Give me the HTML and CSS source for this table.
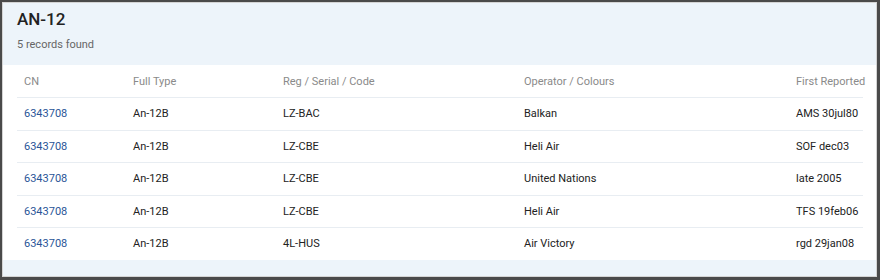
FILE: index.html
```html
<!DOCTYPE html>
<html>
<head>
<meta charset="utf-8">
<link rel="stylesheet" href="styles.css">
</head>
<body>
<div class="card">
  <div class="card-head">
    <h1 class="title">AN-12</h1>
    <div class="count">5 records found</div>
  </div>
  <div class="card-body">
    <table class="records">
      <colgroup>
        <col class="c-cn"><col class="c-type"><col class="c-reg"><col class="c-op"><col>
      </colgroup>
      <thead>
        <tr><th>CN</th><th>Full Type</th><th>Reg / Serial / Code</th><th>Operator / Colours</th><th>First Reported</th></tr>
      </thead>
      <tbody>
        <tr><td><a href="#">6343708</a></td><td>An-12B</td><td>LZ-BAC</td><td>Balkan</td><td>AMS 30jul80</td></tr>
        <tr><td><a href="#">6343708</a></td><td>An-12B</td><td>LZ-CBE</td><td>Heli Air</td><td>SOF dec03</td></tr>
        <tr><td><a href="#">6343708</a></td><td>An-12B</td><td>LZ-CBE</td><td>United Nations</td><td>late 2005</td></tr>
        <tr><td><a href="#">6343708</a></td><td>An-12B</td><td>LZ-CBE</td><td>Heli Air</td><td>TFS 19feb06</td></tr>
        <tr><td><a href="#">6343708</a></td><td>An-12B</td><td>4L-HUS</td><td>Air Victory</td><td>rgd 29jan08</td></tr>
      </tbody>
    </table>
  </div>
  <div class="card-foot"></div>
</div>
</body>
</html>
```
FILE: styles.css
```css
html, body {
  margin: 0;
  padding: 0;
}
body {
  background: #4a4a4a;
  padding: 2px 3px 3px 2px;
  height: 280px;
  box-sizing: border-box;
  font-family: Roboto, "Noto Sans", sans-serif;
}
.card {
  background: #fff;
  border: 1px solid #d4d4d4;
  height: 100%;
  box-sizing: border-box;
  display: flex;
  flex-direction: column;
}
.card-head {
  background: #edf4fa;
  padding: 6px 14px 0 14px;
  height: 62px;
  box-sizing: border-box;
}
.title {
  margin: 0;
  font-size: 17px;
  font-weight: 500;
  color: #222;
  line-height: 20px;
}
.count {
  margin-top: 9px;
  font-size: 11px;
  color: #666;
  line-height: 14px;
}
.card-body {
  padding: 0 13px 0 14px;
}
.records {
  width: 100%;
  border-collapse: collapse;
  table-layout: fixed;
  font-size: 11px;
}
.c-cn { width: 109px; }
.c-type { width: 150px; }
.c-reg { width: 241px; }
.c-op { width: 272px; }
.records th {
  text-align: left;
  font-weight: 400;
  color: #8a8a8a;
  height: 32px;
  padding: 0 0 0 7px;
  white-space: nowrap;
  border-bottom: 1px solid #e8edf2;
}
.records td {
  color: #222;
  height: 31.5px;
  padding: 0 0 0 7px;
  white-space: nowrap;
  border-bottom: 1px solid #e8edf2;
}
.records tbody tr:last-child td {
  border-bottom: none;
}
.records a {
  color: #2a5597;
  text-decoration: none;
}
.card-foot {
  flex: 1;
  background: #edf4fa;
}
```
